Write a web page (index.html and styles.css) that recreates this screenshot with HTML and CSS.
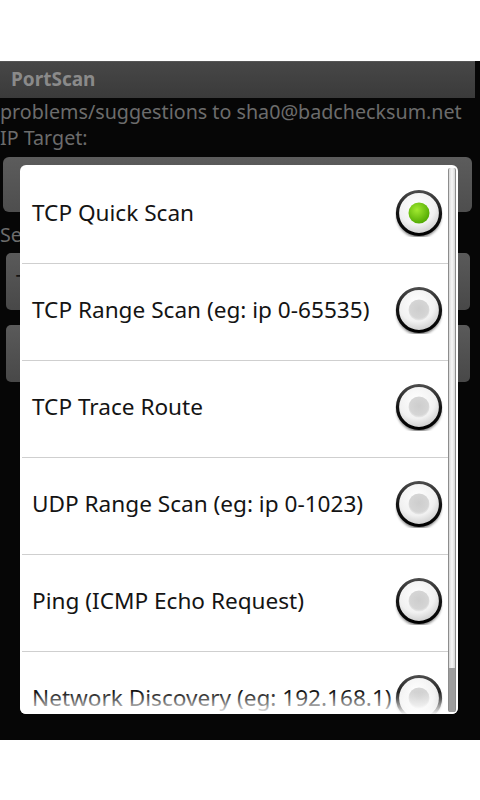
FILE: index.html
```html
<!DOCTYPE html>
<html>
<head>
<meta charset="utf-8">
<link rel="stylesheet" href="styles.css">
</head>
<body>
<svg class="defs" aria-hidden="true">
  <defs>
    <radialGradient id="rfill" cx="45%" cy="35%" r="70%">
      <stop offset="0" stop-color="#ffffff"/>
      <stop offset="0.6" stop-color="#f1f1f1"/>
      <stop offset="1" stop-color="#c4c4c4"/>
    </radialGradient>
    <linearGradient id="rring" x1="0" y1="0" x2="0" y2="1">
      <stop offset="0" stop-color="#4a4a4a"/>
      <stop offset="0.5" stop-color="#141414"/>
      <stop offset="1" stop-color="#000000"/>
    </linearGradient>
    <radialGradient id="rgreen" cx="40%" cy="35%" r="70%">
      <stop offset="0" stop-color="#a2ea30"/>
      <stop offset="1" stop-color="#4da600"/>
    </radialGradient>
    <radialGradient id="rgrey" cx="50%" cy="45%" r="55%">
      <stop offset="0" stop-color="#cdcdcd"/>
      <stop offset="0.8" stop-color="#d5d5d5"/>
      <stop offset="1" stop-color="#e9e9e9"/>
    </radialGradient>
    <filter id="rblur" x="-20%" y="-20%" width="140%" height="140%">
      <feGaussianBlur stdDeviation="1.6"/>
    </filter>
  </defs>
</svg>
<div class="top"></div>
<div class="screen">
  <div class="titlebar">PortScan</div>
  <div class="content">
    <div class="label first">problems/suggestions to sha0@badchecksum.net</div>
    <div class="label">IP Target:</div>
    <div class="edit"></div>
    <div class="label sel">Select scan type:</div>
    <div class="box spinner">TCP Quick Scan</div>
    <div class="box button">Scan</div>
  </div>
  <div class="dialog">
    <div class="list">
      <div class="item"><span class="txt">TCP Quick Scan</span>
        <svg class="radio" viewBox="0 0 48 48"><circle cx="24" cy="26.5" r="22" fill="#000" opacity="0.6" filter="url(#rblur)"/><circle cx="24" cy="24" r="21.5" fill="url(#rfill)" stroke="url(#rring)" stroke-width="3.2"/><circle cx="24" cy="24" r="10.5" fill="url(#rgreen)"/></svg></div>
      <div class="item"><span class="txt">TCP Range Scan (eg: ip 0-65535)</span>
        <svg class="radio" viewBox="0 0 48 48"><circle cx="24" cy="26.5" r="22" fill="#000" opacity="0.6" filter="url(#rblur)"/><circle cx="24" cy="24" r="21.5" fill="url(#rfill)" stroke="url(#rring)" stroke-width="3.2"/><circle cx="24" cy="24" r="10.5" fill="url(#rgrey)"/></svg></div>
      <div class="item"><span class="txt">TCP Trace Route</span>
        <svg class="radio" viewBox="0 0 48 48"><circle cx="24" cy="26.5" r="22" fill="#000" opacity="0.6" filter="url(#rblur)"/><circle cx="24" cy="24" r="21.5" fill="url(#rfill)" stroke="url(#rring)" stroke-width="3.2"/><circle cx="24" cy="24" r="10.5" fill="url(#rgrey)"/></svg></div>
      <div class="item"><span class="txt">UDP Range Scan (eg: ip 0-1023)</span>
        <svg class="radio" viewBox="0 0 48 48"><circle cx="24" cy="26.5" r="22" fill="#000" opacity="0.6" filter="url(#rblur)"/><circle cx="24" cy="24" r="21.5" fill="url(#rfill)" stroke="url(#rring)" stroke-width="3.2"/><circle cx="24" cy="24" r="10.5" fill="url(#rgrey)"/></svg></div>
      <div class="item"><span class="txt">Ping (ICMP Echo Request)</span>
        <svg class="radio" viewBox="0 0 48 48"><circle cx="24" cy="26.5" r="22" fill="#000" opacity="0.6" filter="url(#rblur)"/><circle cx="24" cy="24" r="21.5" fill="url(#rfill)" stroke="url(#rring)" stroke-width="3.2"/><circle cx="24" cy="24" r="10.5" fill="url(#rgrey)"/></svg></div>
      <div class="item"><span class="txt">Network Discovery (eg: 192.168.1)</span>
        <svg class="radio" viewBox="0 0 48 48"><circle cx="24" cy="26.5" r="22" fill="#000" opacity="0.6" filter="url(#rblur)"/><circle cx="24" cy="24" r="21.5" fill="url(#rfill)" stroke="url(#rring)" stroke-width="3.2"/><circle cx="24" cy="24" r="10.5" fill="url(#rgrey)"/></svg></div>
    </div>
    <div class="fade"></div>
    <div class="scrollbar"><div class="thumb"></div></div>
  </div>
</div>
</body>
</html>
```

FILE: styles.css
```css
html, body {
  margin: 0;
  padding: 0;
  background: #ffffff;
  width: 480px;
  height: 800px;
  overflow: hidden;
  font-family: "Noto Sans", "Open Sans", "DejaVu Sans", sans-serif;
}

.defs {
  display: block;
  width: 0;
  height: 0;
  overflow: hidden;
}

.top {
  height: 61px;
}

.screen {
  position: relative;
  height: 679px;
  background: #060606;
  overflow: hidden;
}

.titlebar {
  height: 37px;
  margin-right: 5px;
  box-sizing: border-box;
  background: linear-gradient(#474747, #3a3a3a);
  border-top: 1px solid #555;
  color: #8a8a8a;
  font-weight: bold;
  font-size: 19px;
  line-height: 35px;
  padding-left: 11px;
}

.content {
  display: flex;
  flex-direction: column;
}

.label {
  color: #6c6c6c;
  font-size: 19.7px;
  line-height: 26px;
  white-space: nowrap;
}

.label.first {
  margin-top: 1px;
}

.label.sel {
  margin-top: 10px;
}

.edit {
  margin: 6px 8px 0 3px;
  height: 55px;
  border-radius: 6px;
  background: linear-gradient(#5c5c5c, #4e4e4e);
}

.box {
  margin-left: 6px;
  width: 464px;
  height: 57px;
  box-sizing: border-box;
  border-radius: 5px;
  background: linear-gradient(#5a5a5a, #484848);
  color: #141414;
  font-size: 22px;
  display: flex;
  align-items: center;
  padding-left: 10px;
}

.spinner {
  margin-top: 5px;
}

.button {
  margin-top: 15px;
  justify-content: center;
  padding-left: 0;
}

.dialog {
  position: absolute;
  left: 20px;
  top: 104px;
  width: 438px;
  height: 549px;
  background: #ffffff;
  border-radius: 6px;
  overflow: hidden;
}

.list {
  width: 426px;
  padding: 2px 0 0 2px;
}

.item {
  height: 96px;
  border-bottom: 1px solid #cfcfcf;
  display: flex;
  align-items: center;
  justify-content: space-between;
  padding: 0 5px 0 10px;
  color: #141414;
  font-size: 22.6px;
  white-space: nowrap;
}

.txt {
  line-height: 28px;
  margin-top: -4px;
}

.radio {
  width: 48px;
  height: 48px;
  flex: none;
  margin-top: -5px;
}

.fade {
  position: absolute;
  left: 0;
  right: 0;
  bottom: 0;
  height: 22px;
  background: linear-gradient(rgba(255,255,255,0), rgba(255,255,255,0.95));
}

.scrollbar {
  position: absolute;
  right: 2px;
  top: 3px;
  bottom: 2px;
  width: 8px;
  box-sizing: border-box;
  border-left: 1px solid #8c8c8c;
  border-right: 1px solid #8c8c8c;
  border-radius: 2px;
  background: linear-gradient(90deg, #d8d8d8, #f7f7f7 50%, #d8d8d8);
}

.thumb {
  position: absolute;
  left: 0;
  right: 0;
  bottom: 0;
  height: 44px;
  background: #9d9d9d;
}
```
